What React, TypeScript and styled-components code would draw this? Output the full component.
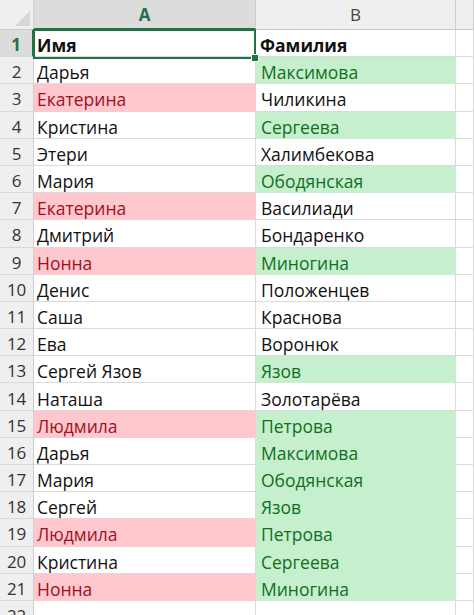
import React from "react";
import styled, { createGlobalStyle } from "styled-components";

const Global = createGlobalStyle`
  html, body { margin: 0; padding: 0; background: #ffffff; }
  body { font-family: "Open Sans", "Noto Sans", sans-serif; overflow: hidden; }
`;

type Tone = "plain" | "bad" | "good";

const rows: { a: string; at: Tone; b: string; bt: Tone }[] = [
  { a: "Дарья", at: "plain", b: "Максимова", bt: "good" },
  { a: "Екатерина", at: "bad", b: "Чиликина", bt: "plain" },
  { a: "Кристина", at: "plain", b: "Сергеева", bt: "good" },
  { a: "Этери", at: "plain", b: "Халимбекова", bt: "plain" },
  { a: "Мария", at: "plain", b: "Ободянская", bt: "good" },
  { a: "Екатерина", at: "bad", b: "Василиади", bt: "plain" },
  { a: "Дмитрий", at: "plain", b: "Бондаренко", bt: "plain" },
  { a: "Нонна", at: "bad", b: "Миногина", bt: "good" },
  { a: "Денис", at: "plain", b: "Положенцев", bt: "plain" },
  { a: "Саша", at: "plain", b: "Краснова", bt: "plain" },
  { a: "Ева", at: "plain", b: "Воронюк", bt: "plain" },
  { a: "Сергей Язов", at: "plain", b: "Язов", bt: "good" },
  { a: "Наташа", at: "plain", b: "Золотарёва", bt: "plain" },
  { a: "Людмила", at: "bad", b: "Петрова", bt: "good" },
  { a: "Дарья", at: "plain", b: "Максимова", bt: "good" },
  { a: "Мария", at: "plain", b: "Ободянская", bt: "good" },
  { a: "Сергей", at: "plain", b: "Язов", bt: "good" },
  { a: "Людмила", at: "bad", b: "Петрова", bt: "good" },
  { a: "Кристина", at: "plain", b: "Сергеева", bt: "good" },
  { a: "Нонна", at: "bad", b: "Миногина", bt: "good" },
];

const COLS = "34px 222px 200px 1fr";

const Sheet = styled.div`
  position: relative;
  width: 474px;
  height: 615px;
  overflow: hidden;
  background: #fff;
`;

const HeaderRow = styled.div`
  display: grid;
  grid-template-columns: ${COLS};
  height: 30px;
`;

const Corner = styled.div`
  position: relative;
  background: #efefef;
  border-right: 1px solid #d0d0d0;
  border-bottom: 1px solid #c8c8c8;
  box-sizing: border-box;
  &::after {
    content: "";
    position: absolute;
    right: 3px;
    bottom: 3px;
    width: 0;
    height: 0;
    border-left: 15px solid transparent;
    border-bottom: 15px solid #d6d6d6;
  }
`;

const ColHead = styled.div<{ $active?: boolean }>`
  box-sizing: border-box;
  display: flex;
  align-items: center;
  justify-content: center;
  background: ${(p) => (p.$active ? "#dcdcdc" : "#efefef")};
  border-right: 1px solid #cfcfcf;
  border-bottom: ${(p) => (p.$active ? "2px solid #217346" : "1px solid #c8c8c8")};
  color: ${(p) => (p.$active ? "#217346" : "#444")};
  font-weight: ${(p) => (p.$active ? 700 : 400)};
  font-size: 17px;
  padding-top: ${(p) => (p.$active ? "1px" : "0")};
`;

const Row = styled.div<{ $h: number }>`
  display: grid;
  grid-template-columns: ${COLS};
  height: ${(p) => p.$h}px;
`;

const RowHead = styled.div<{ $active?: boolean }>`
  box-sizing: border-box;
  display: flex;
  align-items: center;
  justify-content: center;
  padding-top: 3px;
  background: ${(p) => (p.$active ? "#dcdcdc" : "#efefef")};
  border-right: ${(p) => (p.$active ? "2px solid #217346" : "1px solid #cfcfcf")};
  border-bottom: 1px solid #d8d8d8;
  color: ${(p) => (p.$active ? "#217346" : "#333")};
  font-weight: ${(p) => (p.$active ? 700 : 400)};
  font-size: 17px;
  letter-spacing: -0.3px;
`;

const toneBg: Record<Tone, string> = {
  plain: "#ffffff",
  bad: "#ffc7ce",
  good: "#c6efce",
};
const toneFg: Record<Tone, string> = {
  plain: "#111111",
  bad: "#a0101c",
  good: "#10701e",
};

const Cell = styled.div<{ $tone: Tone; $bold?: boolean; $pad?: number }>`
  box-sizing: border-box;
  display: flex;
  align-items: center;
  padding-left: ${(p) => p.$pad ?? 3}px;
  padding-top: 4px;
  white-space: nowrap;
  overflow: hidden;
  background: ${(p) => toneBg[p.$tone]};
  color: ${(p) => toneFg[p.$tone]};
  font-weight: ${(p) => (p.$bold ? 700 : 400)};
  font-size: 17.5px;
  border-right: 1px solid ${(p) => (p.$tone === "plain" ? "#dadada" : toneBg[p.$tone])};
  border-bottom: 1px solid ${(p) => (p.$tone === "plain" ? "#dadada" : toneBg[p.$tone])};
`;

const Selection = styled.div`
  position: absolute;
  left: 33px;
  top: 29px;
  width: 223px;
  height: 30px;
  box-sizing: border-box;
  border: 2px solid #217346;
  pointer-events: none;
  &::after {
    content: "";
    position: absolute;
    right: -5px;
    bottom: -5px;
    width: 6px;
    height: 6px;
    background: #217346;
    border: 1px solid #fff;
  }
`;

const ROW_H = 27.2;

export default function App() {
  return (
    <>
      <Global />
      <Sheet>
        <HeaderRow>
          <Corner />
          <ColHead $active>A</ColHead>
          <ColHead>B</ColHead>
          <ColHead />
        </HeaderRow>
        <Row $h={ROW_H}>
          <RowHead $active>1</RowHead>
          <Cell $tone="plain" $bold>Имя</Cell>
          <Cell $tone="plain" $bold $pad={4}>Фамилия</Cell>
          <Cell $tone="plain" />
        </Row>
        {rows.map((r, i) => (
          <Row key={i} $h={ROW_H}>
            <RowHead>{i + 2}</RowHead>
            <Cell $tone={r.at}>{r.a}</Cell>
            <Cell $tone={r.bt} $pad={5}>{r.b}</Cell>
            <Cell $tone="plain" />
          </Row>
        ))}
        <Row $h={ROW_H}>
          <RowHead>22</RowHead>
          <Cell $tone="plain" />
          <Cell $tone="plain" />
          <Cell $tone="plain" />
        </Row>
        <Selection />
      </Sheet>
    </>
  );
}
